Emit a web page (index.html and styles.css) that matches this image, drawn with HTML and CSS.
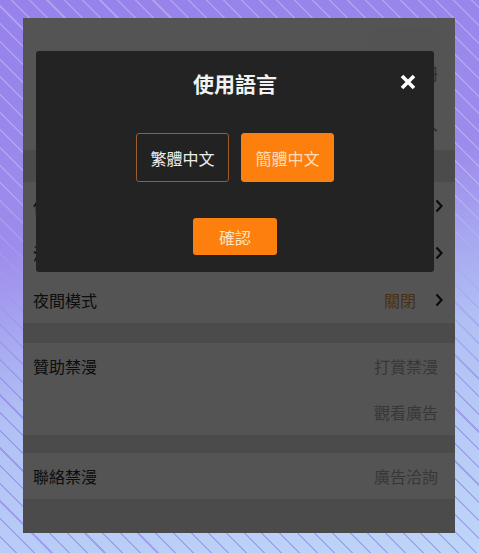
FILE: index.html
```html
<!DOCTYPE html>
<html lang="zh-Hant">

<head>
  <meta charset="UTF-8">
  <meta name="viewport" content="width=device-width, initial-scale=1.0">
  <title>設定</title>
  <link rel="stylesheet" href="styles.css">
</head>

<body>

  <div class="phone">
    <div class="screen">
      <div class="profile">
        <div class="profile-btn"></div>
        <div class="profile-line">註冊</div>
        <div class="profile-line">登入</div>
      </div>

      <div class="gap gap-top"></div>

      <div class="row">
        <span class="label">使用語言</span>
        <span class="value"></span>
        <svg class="chev" viewBox="0 0 8 14"><path d="M1.5 1.5 6.5 7 1.5 12.5" /></svg>
      </div>
      <div class="row">
        <span class="label">清除快取</span>
        <span class="value"></span>
        <svg class="chev" viewBox="0 0 8 14"><path d="M1.5 1.5 6.5 7 1.5 12.5" /></svg>
      </div>
      <div class="row">
        <span class="label">夜間模式</span>
        <span class="value value-on">關閉</span>
        <svg class="chev" viewBox="0 0 8 14"><path d="M1.5 1.5 6.5 7 1.5 12.5" /></svg>
      </div>

      <div class="gap gap-mid"></div>

      <div class="row row-plain">
        <span class="label">贊助禁漫</span>
        <span class="value">打賞禁漫</span>
      </div>
      <div class="row row-plain">
        <span class="label"></span>
        <span class="value">觀看廣告</span>
      </div>

      <div class="gap gap-low"></div>

      <div class="row row-plain">
        <span class="label">聯絡禁漫</span>
        <span class="value">廣告洽詢</span>
      </div>

      <div class="gap gap-end"></div>
    </div>

    <div class="overlay"></div>

    <div class="modal">
      <div class="modal-title">使用語言</div>
      <svg class="modal-close" viewBox="0 0 18 18">
        <path d="M3 3 15 15M15 3 3 15" />
      </svg>
      <div class="lang-list">
        <button class="lang-btn">繁體中文</button>
        <button class="lang-btn active">簡體中文</button>
      </div>
      <button class="confirm-btn">確認</button>
    </div>
  </div>

</body>

</html>
```

FILE: styles.css
```css
html,
body {
  margin: 0;
  padding: 0;
}

body {
  position: relative;
  width: 479px;
  height: 553px;
  overflow: hidden;
  font-family: "Noto Sans CJK TC", "Noto Sans", sans-serif;
  background: linear-gradient(168deg, #9682ea 0%, #9d8cec 38%, #b0c0f4 64%, #bed6f8 100%);
}

/* light streaks up top, purple streaks lower down */
body::before,
body::after {
  content: "";
  position: absolute;
  inset: 0;
}

body::before {
  background: repeating-linear-gradient(45deg, transparent 0 11px, rgba(255, 255, 255, 0.24) 11px 12.5px);
  -webkit-mask-image: linear-gradient(180deg, #000 0%, #000 35%, transparent 70%);
  mask-image: linear-gradient(180deg, #000 0%, #000 35%, transparent 70%);
}

body::after {
  background: repeating-linear-gradient(45deg, transparent 0 11px, rgba(128, 100, 225, 0.42) 11px 12.5px);
  -webkit-mask-image: linear-gradient(180deg, transparent 30%, #000 75%);
  mask-image: linear-gradient(180deg, transparent 30%, #000 75%);
}

.phone {
  position: relative;
  z-index: 1;
  margin: 18px 0 0 23px;
  width: 432px;
  height: 515px;
  overflow: hidden;
}

.screen {
  display: flex;
  flex-direction: column;
  height: 100%;
  background: #fff;
}

.profile {
  position: relative;
  height: 132px;
  padding: 44px 17px 0 0;
  box-sizing: border-box;
  display: flex;
  flex-direction: column;
  align-items: flex-end;
  gap: 28px;
}

.profile-btn {
  position: absolute;
  top: 8px;
  right: 14px;
  width: 76px;
  height: 30px;
  background: #fbfbfb;
  filter: blur(4px);
}

.profile-line {
  font-size: 16px;
  line-height: 22px;
  color: #8a8a8a;
}

.gap {
  background: #e4e4e4;
}

.gap-top {
  height: 32px;
}

.gap-mid {
  height: 20px;
}

.gap-low {
  height: 18px;
}

.gap-end {
  flex: 1;
}

.row {
  height: 47px;
  display: flex;
  align-items: center;
  padding: 0 12px 0 10px;
  background: #fff;
}

.row-plain {
  height: 46px;
  padding-right: 17px;
}

.label {
  font-size: 16px;
  color: #2a2a2a;
}

.value {
  margin-left: auto;
  font-size: 16px;
  color: #a8a8a8;
}

.value-on {
  color: #d8924c;
}

.chev {
  width: 8px;
  height: 14px;
  margin-left: 19px;
  fill: none;
  stroke: #222;
  stroke-width: 2.2;
}

.overlay {
  position: absolute;
  inset: 0;
  background: rgba(0, 0, 0, 0.67);
}

.modal {
  position: absolute;
  left: 13px;
  top: 33px;
  width: 398px;
  height: 221px;
  box-sizing: border-box;
  padding-top: 17px;
  background: #232323;
  border-radius: 3px;
  display: flex;
  flex-direction: column;
  align-items: center;
}

.modal-title {
  font-size: 21px;
  line-height: 30px;
  font-weight: bold;
  color: #f2f2f2;
}

.modal-close {
  position: absolute;
  top: 22px;
  right: 17px;
  width: 18px;
  height: 18px;
  fill: none;
  stroke: #fff;
  stroke-width: 3.6;
}

.lang-list {
  display: flex;
  gap: 12px;
  margin-top: 35px;
}

.lang-btn {
  width: 93px;
  height: 49px;
  font-family: inherit;
  font-size: 16px;
  color: #ededed;
  background: #222;
  border: 1px solid #a05a2c;
  border-radius: 3px;
  padding: 0;
}

.lang-btn.active {
  background: #fd800e;
  border-color: #fd800e;
  color: #ffdcb8;
}

.confirm-btn {
  margin-top: 36px;
  width: 84px;
  height: 37px;
  font-family: inherit;
  font-size: 16px;
  color: #ffe2c4;
  background: #fd800e;
  border: none;
  border-radius: 3px;
  padding: 0;
}
```
